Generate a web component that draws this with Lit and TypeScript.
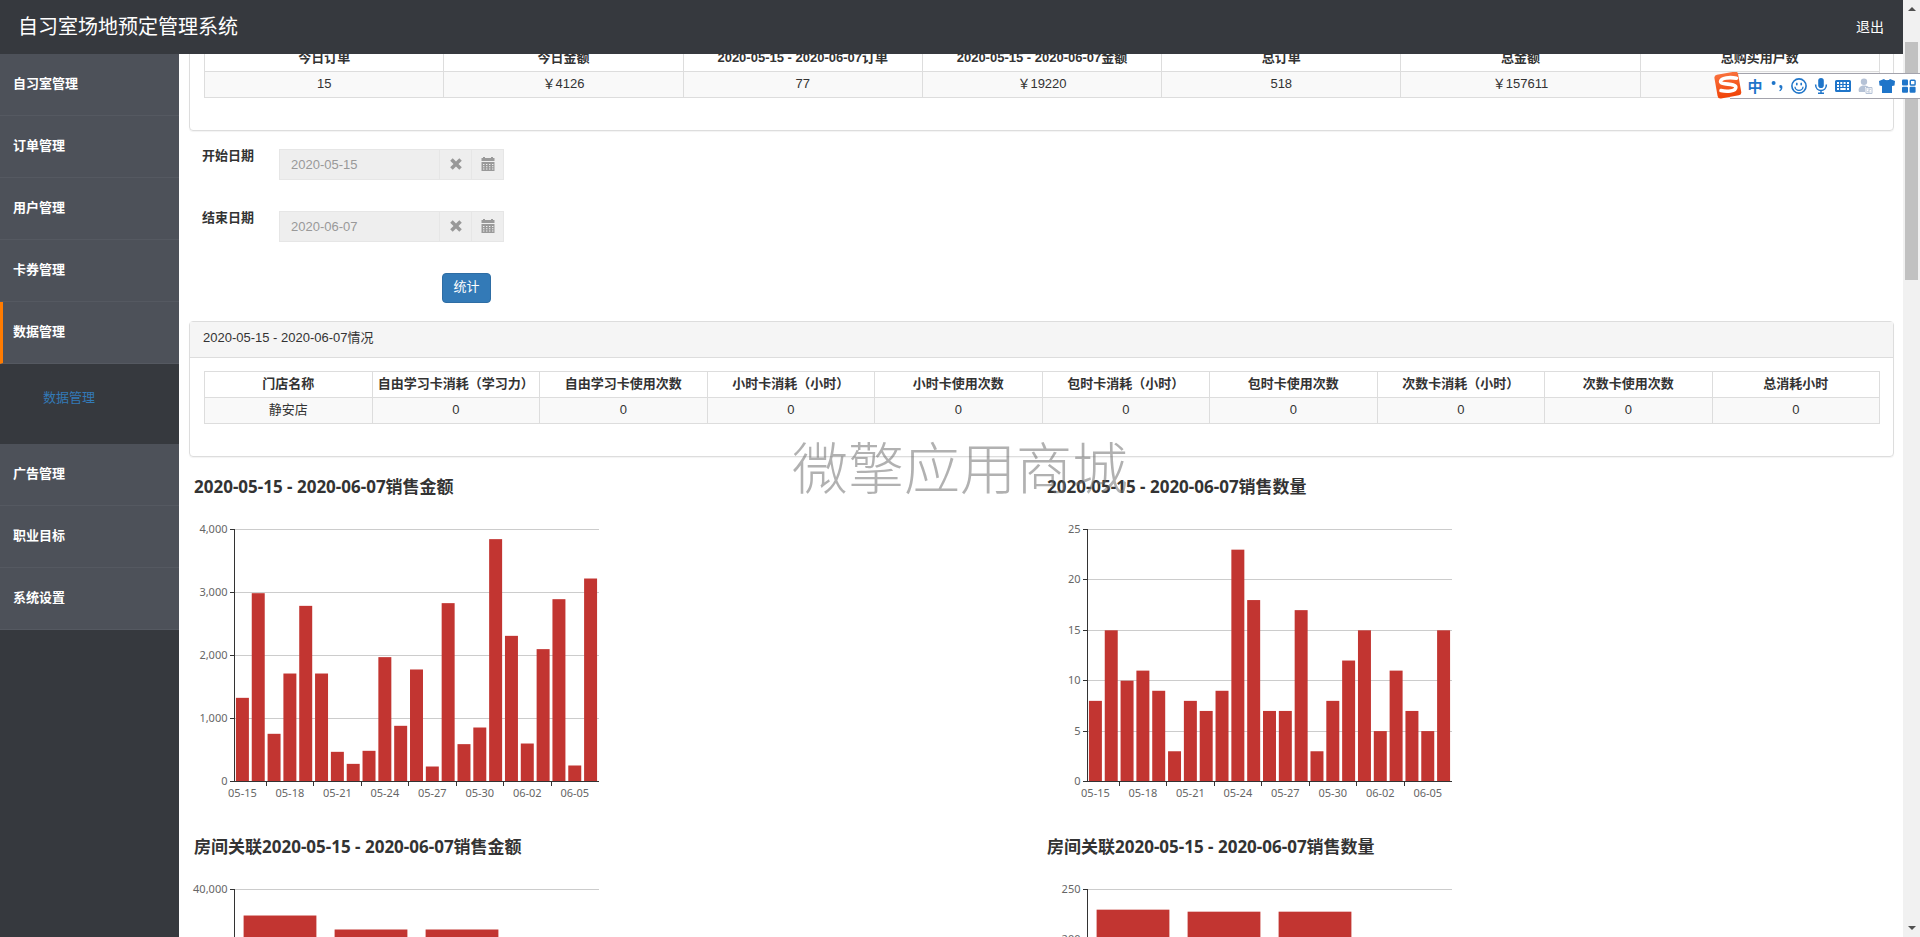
import { LitElement, html, svg, css, nothing } from "lit";
import { customElement, property } from "lit/decorators.js";
import { classMap } from "lit/directives/class-map.js";

interface MenuItem {
  name: string;
  active?: boolean;
  children?: string[];
}

const MENU: MenuItem[] = [
  { name: "自习室管理" },
  { name: "订单管理" },
  { name: "用户管理" },
  { name: "卡券管理" },
  { name: "数据管理", active: true, children: ["数据管理"] },
  { name: "广告管理" },
  { name: "职业目标" },
  { name: "系统设置" },
];

const TOTALS: [string, string][] = [
  ["今日订单", "15"],
  ["今日金额", "￥4126"],
  ["2020-05-15 - 2020-06-07订单", "77"],
  ["2020-05-15 - 2020-06-07金额", "￥19220"],
  ["总订单", "518"],
  ["总金额", "￥157611"],
  ["总购买用户数", ""],
];

const USAGE: [string, string][] = [
  ["门店名称", "静安店"],
  ["自由学习卡消耗（学习力）", "0"],
  ["自由学习卡使用次数", "0"],
  ["小时卡消耗（小时）", "0"],
  ["小时卡使用次数", "0"],
  ["包时卡消耗（小时）", "0"],
  ["包时卡使用次数", "0"],
  ["次数卡消耗（小时）", "0"],
  ["次数卡使用次数", "0"],
  ["总消耗小时", "0"],
];

const DAYS = Array.from({ length: 23 }, (_, i) => {
  const d = new Date(Date.UTC(2020, 4, 15 + i));
  return d.toISOString().slice(5, 10);
});

const AMOUNTS = [
  1328, 2989, 757, 1714, 2788, 1714, 471, 280, 487, 1974, 884, 1778, 238, 2831,
  593, 857, 3847, 2312, 603, 2101, 2894, 254, 3222,
];
const COUNTS = [
  8, 15, 10, 11, 9, 3, 8, 7, 9, 23, 18, 7, 7, 17, 3, 8, 12, 15, 5, 11, 7, 5, 15,
];

/** Vertical bar chart with a bold title, value axis and category axis. */
@customElement("bar-chart")
export class BarChart extends LitElement {
  @property() heading = "";
  @property({ attribute: false }) values: number[] = [];
  @property({ attribute: false }) labels: string[] = [];
  @property({ type: Number }) max = 100;
  @property({ type: Number }) step = 20;
  @property({ type: Number }) every = 1;
  @property({ type: Number }) fill = 0.8;

  static styles = css`
    :host {
      display: block;
      min-height: 360px;
    }
    .chart {
      display: block;
      font-family: "Noto Sans", "Noto Sans CJK SC", sans-serif;
    }
    .title {
      font-size: 17px;
      font-weight: 700;
      fill: #333;
    }
    .tick {
      font-size: 11px;
      fill: #666;
    }
    .grid {
      stroke: #ccc;
      shape-rendering: crispEdges;
    }
    .axis {
      stroke: #333;
      shape-rendering: crispEdges;
    }
    .bar {
      fill: #c23531;
    }
  `;

  render() {
    const left = 45.5;
    const top = 54.5;
    const w = 364;
    const h = 252;
    const base = top + h;
    const band = w / Math.max(1, this.values.length);
    const bar = band * this.fill;
    const marks: number[] = [];
    for (let v = 0; v <= this.max; v += this.step) marks.push(v);
    const yOf = (v: number) => base - (v / this.max) * h;

    return html`<svg class="chart" width="450" height="360" role="img" aria-label=${this.heading}>
      <text class="title" x="5" y="18">${this.heading}</text>
      ${marks.map((v) => {
        const y = Math.floor(yOf(v)) + 0.5;
        return svg`
          ${v ? svg`<line class="grid" x1=${left} x2=${left + w} y1=${y} y2=${y}></line>` : nothing}
          <line class="axis" x1=${left - 5} x2=${left} y1=${y} y2=${y}></line>
          <text class="tick" text-anchor="end" x=${left - 7} y=${y + 3}>${v.toLocaleString("en-US")}</text>`;
      })}
      ${this.values.map((v, i) => svg`<rect class="bar" x=${left + band * i + (band - bar) / 2}
          y=${yOf(v)} width=${bar} height=${base - yOf(v)}></rect>`)}
      <line class="axis" x1=${left} x2=${left} y1=${top - 1} y2=${base}></line>
      <line class="axis" x1=${left} x2=${left + w} y1=${base} y2=${base}></line>
      ${this.labels.map((t, i) =>
        i % this.every
          ? nothing
          : svg`
          ${i ? svg`<line class="axis" x1=${left + band * (i - 1)} x2=${left + band * (i - 1)} y1=${base} y2=${base + 4}></line>` : nothing}
          <text class="tick" text-anchor="middle" x=${left + band * (i + 0.5)} y=${base + 15}>${t}</text>`
      )}
    </svg>`;
  }
}

/** Floating toolbar of the input method. */
@customElement("ime-bar")
export class ImeBar extends LitElement {
  static styles = css`
    :host {
      display: flex;
      align-items: center;
      height: 28px;
    }
    .logo {
      display: block;
      width: 30px;
      height: 28px;
      z-index: 1;
    }
    .tools {
      display: flex;
      align-items: center;
      height: 24px;
      margin-left: -14px;
      padding-left: 14px;
      background: #fff;
      border-top: 1px solid #a3a3ac;
      border-bottom: 1px solid #a3a3ac;
    }
    .tool {
      display: grid;
      place-items: center;
      width: 22px;
      height: 22px;
      padding: 0;
      border: 0;
      background: none;
      color: #1f75c9;
      font: 700 15px/22px "Noto Sans CJK SC", sans-serif;
    }
    .tool svg {
      display: block;
      width: 16px;
      height: 16px;
      fill: currentColor;
    }
    .dim {
      color: #b5c2d6;
    }
  `;

  render() {
    return html`
      <svg class="logo" viewBox="0 0 30 28">
        <defs>
          <linearGradient id="o" x1="0" y1="0" x2="0" y2="1">
            <stop offset="0" stop-color="#f9703c"></stop>
            <stop offset="1" stop-color="#f04408"></stop>
          </linearGradient>
        </defs>
        <rect x="2" y="1" width="24" height="24" rx="3" fill="url(#o)" transform="rotate(-10 14 14)"></rect>
        <path d="M22.5 6.2C16 5 7 5.6 6.6 9.4C6.4 13.4 21.6 10.8 21.8 15.2C21.8 19.6 12.6 19.8 7 18.6"
          fill="none" stroke="#fff" stroke-width="3.6" stroke-linecap="round"></path>
      </svg>
      <div class="tools">
        <button class="tool" aria-label="中文">中</button>
        <button class="tool" aria-label="标点">
          <svg viewBox="0 0 16 16"><circle cx="4.6" cy="5" r="2"></circle><path d="M10.4 7.6a1.8 1.8 0 0 1 3 1.6c0 2-1 3.4-2.6 4l-.5-.9c.9-.4 1.4-1 1.5-1.8-1-.2-1.7-1.1-1.4-2.9z"></path></svg>
        </button>
        <button class="tool" aria-label="表情">
          <svg viewBox="0 0 16 16"><circle cx="8" cy="8" r="7.1" fill="none" stroke="currentColor" stroke-width="1.6"></circle><ellipse cx="5.8" cy="6" rx=".9" ry="1.5"></ellipse><ellipse cx="10.2" cy="6" rx=".9" ry="1.5"></ellipse><path d="M4 8.8a4 3.6 0 0 0 8 0" fill="none" stroke="currentColor" stroke-width="1.3"></path></svg>
        </button>
        <button class="tool" aria-label="语音">
          <svg viewBox="0 0 16 16"><rect x="5.2" y="0" width="5.6" height="10" rx="2.8"></rect><path d="M2.6 6.5c0 8 10.8 8 10.8 0M8 12.5V15M5 15.2h6" fill="none" stroke="currentColor" stroke-width="1.5"></path></svg>
        </button>
        <button class="tool" aria-label="软键盘">
          <svg viewBox="0 0 16 16"><path fill-rule="evenodd" d="M1.5 2h13A1.5 1.5 0 0 1 16 3.5v9a1.5 1.5 0 0 1-1.5 1.5h-13A1.5 1.5 0 0 1 0 12.5v-9A1.5 1.5 0 0 1 1.5 2zM2 4v2h2V4zm3.300 0v2h2V4zm3.300 0v2h2V4zm3.400 0v2h2V4zM2 7v2h2V7zm3.300 0v2h2V7zm3.300 0v2h2V7zm3.400 0v2h2V7zM2 10v2h2v-2zm3.300 0v2h5.400v-2zm6.700 0v2h2v-2z"></path></svg>
        </button>
        <button class="tool dim" aria-label="账户">
          <svg viewBox="0 0 16 16"><circle cx="7" cy="3.8" r="3.2"></circle><path d="M2 14c-1.5-4 1.5-6.5 5-6.5 2 0 3.5.5 4.5 1.5H8v5z"></path><path d="M9 9.5h6v6H9z" fill="#fff" stroke="currentColor"></path><path d="M10.5 11h3l-3 3h3" fill="none" stroke="currentColor"></path></svg>
        </button>
        <button class="tool" aria-label="皮肤">
          <svg viewBox="0 0 16 16"><path d="M0 3l5-2c1.2 1.6 4.8 1.6 6 0l5 2-.5 4.500-2.500.5V15H3V8L.5 7.500z"></path></svg>
        </button>
        <button class="tool" aria-label="工具箱">
          <svg viewBox="0 0 16 16"><rect x="1" y="1.5" width="6" height="6" rx="1"></rect><rect x="1" y="8.8" width="6" height="6" rx="1"></rect><rect x="8.6" y="8.8" width="6" height="6" rx="1"></rect><rect x="9.3" y="2.2" width="4.8" height="4.8" rx=".8" fill="none" stroke="currentColor" stroke-width="1.4"></rect></svg>
        </button>
      </div>
    `;
  }
}

@customElement("app-root")
export class AppRoot extends LitElement {
  static styles = css`
    :host {
      display: flex;
      position: relative;
      height: 100vh;
      overflow: hidden;
      background: #fff;
      color: #333;
      font: 13px/18px "Liberation Sans", "Noto Sans CJK SC", sans-serif;
    }
    *,
    *::before {
      box-sizing: border-box;
    }
    .page {
      flex: 1;
      min-width: 0;
      display: flex;
      flex-direction: column;
    }
    .top {
      flex: none;
      display: flex;
      align-items: center;
      justify-content: space-between;
      height: 54px;
      padding: 0 19px 0 18px;
      background: #36393e;
      color: #fff;
    }
    .brand {
      margin: 0;
      font-size: 20px;
      line-height: 28px;
      font-weight: 400;
    }
    .logout {
      color: #fff;
      font-size: 14px;
      text-decoration: none;
    }
    .body {
      flex: 1;
      min-height: 0;
      display: flex;
    }
    .side {
      flex: none;
      width: 179px;
      background: #36393e;
    }
    .menu,
    .sub {
      margin: 0;
      padding: 0;
      list-style: none;
    }
    .item {
      display: flex;
      align-items: center;
      height: 62px;
      padding: 0 0 2px 13px;
      border-bottom: 1px solid #555961;
      background: #4d5159;
      color: #fff;
      font-weight: 700;
      text-decoration: none;
    }
    .item.active {
      padding-left: 10px;
      border-left: 3px solid #ff7b00;
    }
    .sub {
      height: 80px;
      padding: 25px 0 0 43px;
    }
    .subitem {
      color: #337ab7;
      text-decoration: none;
    }
    .main {
      flex: 1;
      min-width: 0;
      padding: 0 9px 0 10px;
      overflow-y: auto;
      scrollbar-width: none;
    }
    .panel {
      border: 1px solid #ddd;
      border-radius: 4px;
      box-shadow: 0 1px 1px rgba(0, 0, 0, 0.05);
    }
    .panel-title {
      margin: 0;
      padding: 7px 13px 10px;
      border-bottom: 1px solid #ddd;
      background: #f5f5f5;
      font-size: 13px;
      font-weight: 400;
    }
    .panel-body {
      padding: 13px 13px 32px 14px;
    }
    .data {
      width: 100%;
      table-layout: fixed;
      border-collapse: collapse;
      text-align: center;
    }
    .data th,
    .data td {
      height: 26px;
      padding: 0 4px 2px;
      border: 1px solid #ddd;
      white-space: nowrap;
    }
    .data td {
      background: #f9f9f9;
    }
    .filters {
      display: grid;
      grid-template-columns: 77px 225px;
      row-gap: 31px;
      padding: 18px 13px;
    }
    .filters label {
      line-height: 14px;
      font-weight: 700;
    }
    .date {
      display: flex;
      height: 31px;
      border: 1px solid #e6e6e6;
      background: #eee;
    }
    .date input {
      flex: 1;
      min-width: 0;
      padding: 0 11px;
      border: 0;
      background: none;
      color: #999;
      font: inherit;
    }
    .date button {
      display: grid;
      place-items: center;
      width: 32px;
      padding: 0 0 2px;
      border: 0;
      border-left: 1px solid #e6e6e6;
      background: none;
      color: #999;
    }
    .date svg {
      display: block;
      width: 14px;
      height: 14px;
      fill: currentColor;
    }
    .submit {
      grid-column: 2;
      justify-self: end;
      width: 49px;
      height: 30px;
      margin-right: 13px;
      padding: 0 0 2px;
      border: 1px solid #2e6da4;
      border-radius: 4px;
      background: #337ab7;
      color: #fff;
      font: inherit;
    }
    .charts {
      display: grid;
      grid-template-columns: 1fr 1fr;
      padding-top: 18px;
    }
    .scroll {
      flex: none;
      display: flex;
      flex-direction: column;
      justify-content: space-between;
      align-items: center;
      width: 17px;
      padding: 6px 0;
      background: #f1f1f1;
    }
    .scroll svg {
      display: block;
      fill: #505050;
    }
    .track {
      flex: 1;
      width: 13px;
      padding: 30px 0 0;
    }
    .thumb {
      height: 27%;
      background: #c1c1c1;
    }
    .ime {
      position: absolute;
      top: 72px;
      right: 0;
      z-index: 3;
    }
    .mark {
      position: absolute;
      inset: 0;
      display: grid;
      place-items: center;
      padding-bottom: 8px;
      color: rgba(105, 105, 105, 0.52);
      font: 300 56px/60px "Noto Sans CJK SC", sans-serif;
      pointer-events: none;
    }
  `;

  async firstUpdated() {
    const charts = this.renderRoot.querySelectorAll<BarChart>("bar-chart");
    await Promise.all(Array.from(charts, (c) => c.updateComplete));
    const main = this.renderRoot.querySelector<HTMLElement>(".main");
    if (main) main.scrollTop = 23;
  }

  private table(rows: [string, string][]) {
    return html`<table class="data">
      <thead>
        <tr>${rows.map(([h]) => html`<th scope="col">${h}</th>`)}</tr>
      </thead>
      <tbody>
        <tr>${rows.map(([, v]) => html`<td>${v}</td>`)}</tr>
      </tbody>
    </table>`;
  }

  private date(id: string, label: string, value: string) {
    return html`<label for=${id}>${label}</label>
      <div class="date">
        <input id=${id} type="text" readonly .value=${value} />
        <button type="button" aria-label="清除">
          <svg viewBox="0 0 14 14"><path d="M3.7 1.2L7 4.5l3.3-3.3 2.5 2.5L9.5 7l3.3 3.3-2.5 2.5L7 9.5l-3.3 3.3-2.5-2.5L4.5 7 1.2 3.7z"></path></svg>
        </button>
        <button type="button" aria-label="选择日期">
          <svg viewBox="0 0 14 14"><path d="M.5 1H2V0h2v1h6V0h2v1h1.500v3H.5z"></path><path fill-rule="evenodd" d="M.5 5h13v9H.5zM2 7v1h1.400V7zm3 0v1h1.400V7zm3 0v1h1.400V7zm3 0v1h1.400V7zM2 9.200v1h1.400v-1zm3 0v1h1.400v-1zm3 0v1h1.400v-1zm3 0v1h1.400v-1zM2 11.500v1h1.400v-1zm3 0v1h1.400v-1zm3 0v1h1.400v-1zm3 0v1h1.400v-1z"></path></svg>
        </button>
      </div>`;
  }

  render() {
    return html`
      <div class="page">
        <header class="top">
          <h1 class="brand">自习室场地预定管理系统</h1>
          <a class="logout" href="#logout">退出</a>
        </header>
        <div class="body">
          <nav class="side">
            <ul class="menu">
              ${MENU.map(
                (m) => html`<li>
                  <a class=${classMap({ item: true, active: !!m.active })} href="#">${m.name}</a>
                  ${m.children
                    ? html`<ul class="sub">
                        ${m.children.map((c) => html`<li><a class="subitem" href="#">${c}</a></li>`)}
                      </ul>`
                    : nothing}
                </li>`
              )}
            </ul>
          </nav>
          <main class="main">
            <section class="panel">
              <div class="panel-body">${this.table(TOTALS)}</div>
            </section>
            <form class="filters">
              ${this.date("start", "开始日期", "2020-05-15")}
              ${this.date("end", "结束日期", "2020-06-07")}
              <button class="submit" type="button">统计</button>
            </form>
            <section class="panel">
              <h2 class="panel-title">2020-05-15 - 2020-06-07情况</h2>
              <div class="panel-body">${this.table(USAGE)}</div>
            </section>
            <section class="charts">
              <bar-chart heading="2020-05-15 - 2020-06-07销售金额" .values=${AMOUNTS} .labels=${DAYS}
                max="4000" step="1000" every="3" fill="0.82"></bar-chart>
              <bar-chart heading="2020-05-15 - 2020-06-07销售数量" .values=${COUNTS} .labels=${DAYS}
                max="25" step="5" every="3" fill="0.82"></bar-chart>
              <bar-chart heading="房间关联2020-05-15 - 2020-06-07销售金额" .values=${[35870, 33650, 33650, 24000]}
                max="40000" step="10000"></bar-chart>
              <bar-chart heading="房间关联2020-05-15 - 2020-06-07销售数量" .values=${[230, 228, 228, 180]}
                max="250" step="50"></bar-chart>
            </section>
          </main>
        </div>
      </div>
      <div class="scroll" aria-hidden="true">
        <svg width="8" height="6" viewBox="0 0 8 6"><path d="M4 1l4 4H0z"></path></svg>
        <div class="track"><div class="thumb"></div></div>
        <svg width="8" height="6" viewBox="0 0 8 6"><path d="M4 5l4-4H0z"></path></svg>
      </div>
      <ime-bar class="ime"></ime-bar>
      <div class="mark">微擎应用商城</div>
    `;
  }
}
